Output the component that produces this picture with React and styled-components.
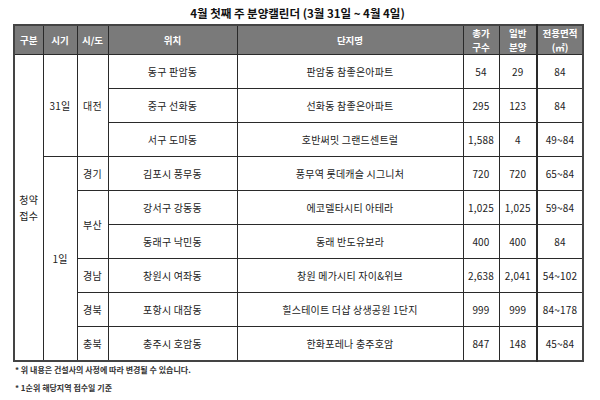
import React from 'react';
import styled, { createGlobalStyle } from 'styled-components';

const GlobalStyle = createGlobalStyle`
  body {
    margin: 0;
    background: #fff;
    font-family: "Noto Sans CJK KR", "Noto Sans", sans-serif;
    color: #222;
  }
`;

const rows = [
  { loc: '동구 판암동', name: '판암동 참좋은아파트', total: '54', general: '29', area: '84' },
  { loc: '중구 선화동', name: '선화동 참좋은아파트', total: '295', general: '123', area: '84' },
  { loc: '서구 도마동', name: '호반써밋 그랜드센트럴', total: '1,588', general: '4', area: '49~84' },
  { loc: '김포시 풍무동', name: '풍무역 롯데캐슬 시그니처', total: '720', general: '720', area: '65~84' },
  { loc: '강서구 강동동', name: '에코델타시티 아테라', total: '1,025', general: '1,025', area: '59~84' },
  { loc: '동래구 낙민동', name: '동래 반도유보라', total: '400', general: '400', area: '84' },
  { loc: '창원시 여좌동', name: '창원 메가시티 자이&위브', total: '2,638', general: '2,041', area: '54~102' },
  { loc: '포항시 대잠동', name: '힐스테이트 더샵 상생공원 1단지', total: '999', general: '999', area: '84~178' },
  { loc: '충주시 호암동', name: '한화포레나 충주호암', total: '847', general: '148', area: '45~84' },
];

// extra cells at the start of each row (rowspans)
const leading = {
  0: [
    { text: <>청약<br />접수</>, span: 9 },
    { text: '31일', span: 3 },
    { text: '대전', span: 3 },
  ],
  3: [
    { text: '1일', span: 6 },
    { text: '경기', span: 1 },
  ],
  4: [{ text: '부산', span: 2 }],
  6: [{ text: '경남', span: 1 }],
  7: [{ text: '경북', span: 1 }],
  8: [{ text: '충북', span: 1 }],
};

const Page = styled.div`
  padding: 6px 0 0 13px;
  width: 569px;
`;

const Title = styled.h1`
  margin: 0 0 3px;
  text-align: center;
  font-size: 11.5px;
  line-height: 15px;
  font-weight: 700;
  color: #111;
`;

const Table = styled.table`
  width: 569px;
  border-collapse: collapse;
  table-layout: fixed;
  border: 2px solid #444;
`;

const Head = styled.th`
  height: 28px;
  padding: 0;
  background: #7a7a7a;
  color: #fff;
  font-size: 9.5px;
  line-height: 14px;
  font-weight: 700;
  border: 1px solid #2a2a2a;
  border-left-width: ${p => (p.$thick ? '2px' : '1px')};
`;

const Cell = styled.td`
  height: 33px;
  padding: 0;
  text-align: center;
  vertical-align: middle;
  font-size: 10px;
  line-height: 16px;
  letter-spacing: 0.2px;
  color: #222;
  border: 1px solid #2a2a2a;
  border-left-width: ${p => (p.$thick ? '2px' : '1px')};
  white-space: nowrap;
`;

const Notes = styled.div`
  margin-top: 2px;
  padding-left: 2px;
  display: flex;
  flex-direction: column;
  gap: 6px;
`;

const Note = styled.p`
  margin: 0;
  font-size: 8px;
  line-height: 12px;
  font-weight: 700;
  color: #333;
`;

const widths = [29, 34, 31, 129, 226, 36, 38, 46];

export default function App() {
  return (
    <Page>
      <GlobalStyle />
      <Title>4월 첫째 주 분양캘린더 (3월 31일 ~ 4월 4일)</Title>
      <Table>
        <colgroup>
          {widths.map((w, i) => <col key={i} style={{ width: w }} />)}
        </colgroup>
        <thead>
          <tr>
            <Head>구분</Head>
            <Head>시기</Head>
            <Head>시/도</Head>
            <Head>위치</Head>
            <Head>단지명</Head>
            <Head>총가<br />구수</Head>
            <Head>일반<br />분양</Head>
            <Head $thick>전용면적<br />(㎡)</Head>
          </tr>
        </thead>
        <tbody>
          {rows.map((r, i) => (
            <tr key={i}>
              {(leading[i] || []).map((c, j) => (
                <Cell key={j} rowSpan={c.span}>{c.text}</Cell>
              ))}
              <Cell>{r.loc}</Cell>
              <Cell>{r.name}</Cell>
              <Cell>{r.total}</Cell>
              <Cell>{r.general}</Cell>
              <Cell $thick>{r.area}</Cell>
            </tr>
          ))}
        </tbody>
      </Table>
      <Notes>
        <Note>* 위 내용은 건설사의 사정에 따라 변경될 수 있습니다.</Note>
        <Note>* 1순위 해당지역 접수일 기준</Note>
      </Notes>
    </Page>
  );
}
